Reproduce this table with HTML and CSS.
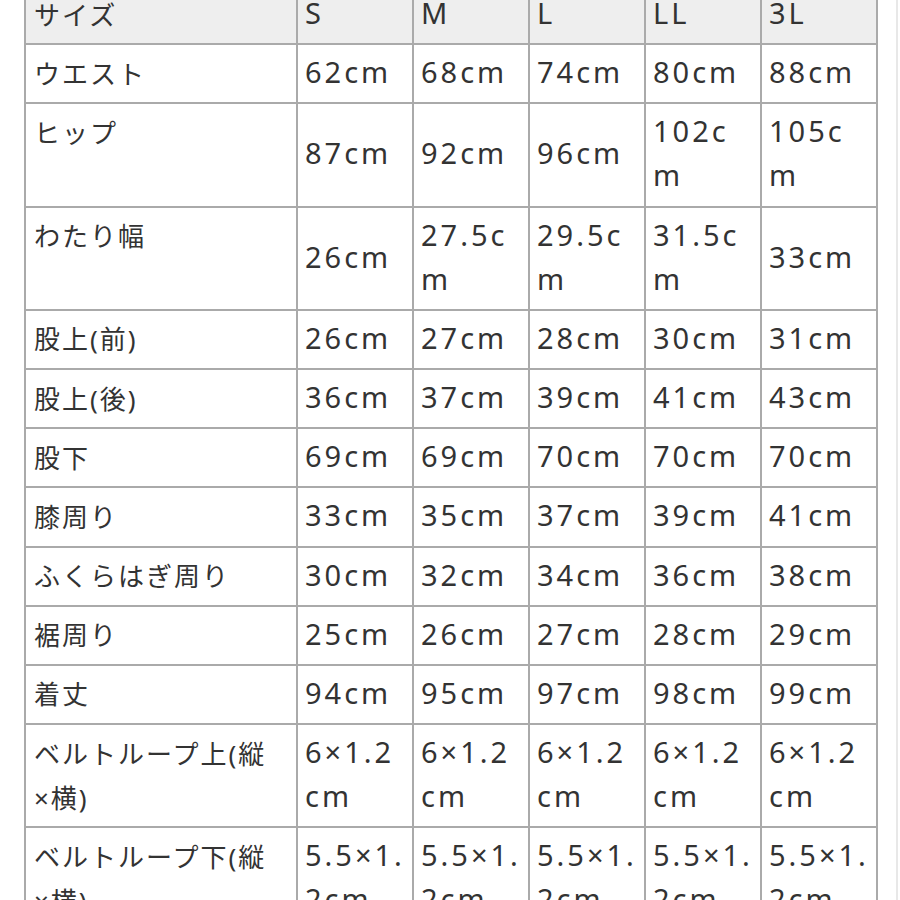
FILE: index.html
```html
<!DOCTYPE html>
<html lang="ja">
<head>
<meta charset="utf-8">
<link rel="stylesheet" href="styles.css">
</head>
<body>
<div class="page">
<table class="size-table">
<colgroup>
<col class="c-label"><col class="c-val"><col class="c-val"><col class="c-val"><col class="c-val"><col class="c-val">
</colgroup>
<thead>
<tr class="head"><th>サイズ</th><td>S</td><td>M</td><td>L</td><td>LL</td><td>3L</td></tr>
</thead>
<tbody>
<tr><th>ウエスト</th><td>62cm</td><td>68cm</td><td>74cm</td><td>80cm</td><td>88cm</td></tr>
<tr><th>ヒップ</th><td>87cm</td><td>92cm</td><td>96cm</td><td>102cm</td><td>105cm</td></tr>
<tr><th>わたり幅</th><td>26cm</td><td>27.5cm</td><td>29.5cm</td><td>31.5cm</td><td>33cm</td></tr>
<tr><th>股上(前)</th><td>26cm</td><td>27cm</td><td>28cm</td><td>30cm</td><td>31cm</td></tr>
<tr><th>股上(後)</th><td>36cm</td><td>37cm</td><td>39cm</td><td>41cm</td><td>43cm</td></tr>
<tr><th>股下</th><td>69cm</td><td>69cm</td><td>70cm</td><td>70cm</td><td>70cm</td></tr>
<tr><th>膝周り</th><td>33cm</td><td>35cm</td><td>37cm</td><td>39cm</td><td>41cm</td></tr>
<tr><th>ふくらはぎ周り</th><td>30cm</td><td>32cm</td><td>34cm</td><td>36cm</td><td>38cm</td></tr>
<tr><th>裾周り</th><td>25cm</td><td>26cm</td><td>27cm</td><td>28cm</td><td>29cm</td></tr>
<tr><th>着丈</th><td>94cm</td><td>95cm</td><td>97cm</td><td>98cm</td><td>99cm</td></tr>
<tr><th>ベルトループ上(縦×横)</th><td>6×1.2cm</td><td>6×1.2cm</td><td>6×1.2cm</td><td>6×1.2cm</td><td>6×1.2cm</td></tr>
<tr><th>ベルトループ下(縦×横)</th><td>5.5×1.2cm</td><td>5.5×1.2cm</td><td>5.5×1.2cm</td><td>5.5×1.2cm</td><td>5.5×1.2cm</td></tr>
</tbody>
</table>
</div>
</body>
</html>
```

FILE: styles.css
```css
html, body {
  margin: 0;
  padding: 0;
  background: #ffffff;
}
body {
  overflow: hidden;
  height: 900px;
}
.page {
  width: 898px;
  margin-top: -16px;
  padding-left: 24px;
  border-right: 2px solid #e8e8e8;
  box-sizing: border-box;
  min-height: 1200px;
}
.size-table {
  border-collapse: collapse;
  table-layout: fixed;
  width: 853px;
  font-family: "Noto Sans", "Noto Sans CJK JP", sans-serif;
  color: #333333;
  line-height: 44px;
}
.c-label { width: 272px; }
.c-val { width: 116px; }
.size-table th,
.size-table td {
  border: 2px solid #aaaaaa;
  text-align: left;
  font-weight: normal;
  word-break: break-all;
}
.size-table th {
  font-size: 26px;
  letter-spacing: 2px;
  padding: 6.6px 20px 6.6px 8px;
  vertical-align: top;
}
.size-table td {
  font-size: 29px;
  letter-spacing: 3px;
  padding: 5px 3px 8.2px 7px;
  vertical-align: middle;
}
.head th,
.head td {
  background: #eeeeee;
  vertical-align: top;
}
```
